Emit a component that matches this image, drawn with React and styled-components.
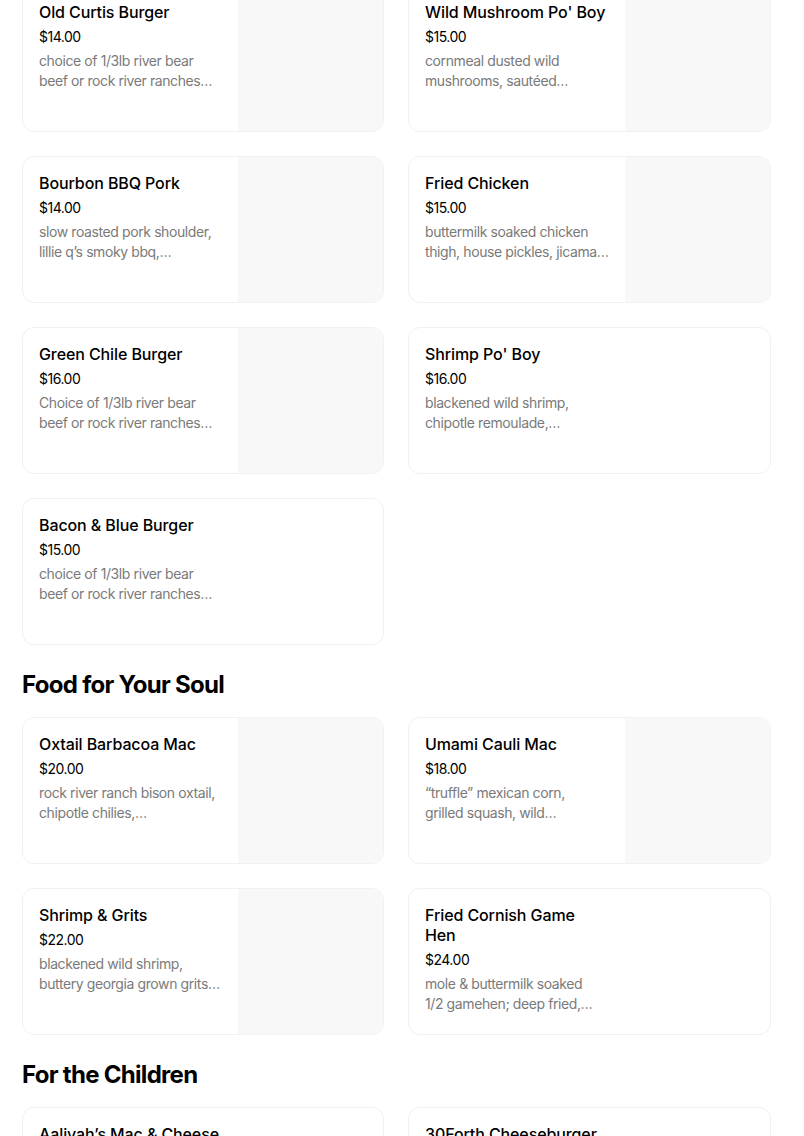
import styled, { createGlobalStyle } from "styled-components";

const nb = "\u00a0";

const sections = [
  {
    title: null,
    items: [
      { name: "Old Curtis Burger", price: "$14.00", desc: `choice of 1/3lb river bear beef or rock river ranches bison,${nb}cheddar`, img: true },
      { name: "Wild Mushroom Po' Boy", price: "$15.00", desc: `cornmeal dusted wild mushrooms, sautéed collard${nb}greens`, img: true },
      { name: "Bourbon BBQ Pork", price: "$14.00", desc: `slow roasted pork shoulder, lillie q’s smoky bbq, housemade${nb}slaw`, img: true },
      { name: "Fried Chicken", price: "$15.00", desc: "buttermilk soaked chicken thigh, house pickles, jicama slaw, hot honey", img: true },
      { name: "Green Chile Burger", price: "$16.00", desc: `Choice of 1/3lb river bear beef or rock river ranches bison,${nb}roasted`, img: true },
      { name: "Shrimp Po' Boy", price: "$16.00", desc: `blackened wild shrimp, chipotle remoulade, shredded${nb}lettuce`, img: false },
      { name: "Bacon & Blue Burger", price: "$15.00", desc: `choice of 1/3lb river bear beef or rock river ranches bison,${nb}bacon`, img: false },
    ],
  },
  {
    title: "Food for Your Soul",
    items: [
      { name: "Oxtail Barbacoa Mac", price: "$20.00", desc: `rock river ranch bison oxtail, chipotle chilies, cavatappi${nb}pasta`, img: true },
      { name: "Umami Cauli Mac", price: "$18.00", desc: `“truffle” mexican corn, grilled${nb}squash, wild mushrooms,${nb}cauliflower cream`, img: true },
      { name: "Shrimp & Grits", price: "$22.00", desc: `blackened wild shrimp, buttery georgia grown grits, andouille${nb}gravy`, img: true },
      { name: "Fried Cornish Game Hen", price: "$24.00", desc: `mole & buttermilk soaked 1/2${nb}gamehen; deep fried, collard${nb}greens`, img: false },
    ],
  },
  {
    title: "For the Children",
    items: [
      { name: "Aaliyah’s Mac & Cheese", price: "$9.00", desc: "cavatappi, cheese sauce", img: false },
      { name: "30Forth Cheeseburger", price: "$10.00", desc: "kids burger with cheddar", img: false },
    ],
  },
];

export default function App() {
  return (
    <>
      <GlobalStyle />
      <Page>
        {sections.map((s, i) => (
          <Section key={i}>
            {s.title && <Heading>{s.title}</Heading>}
            <Grid>
              {s.items.map((it) => (
                <Card key={it.name}>
                  <Info>
                    <Name>{it.name}</Name>
                    <Price>{it.price}</Price>
                    <Desc>{it.desc}</Desc>
                  </Info>
                  <Photo $empty={!it.img} />
                </Card>
              ))}
            </Grid>
          </Section>
        ))}
      </Page>
    </>
  );
}

const GlobalStyle = createGlobalStyle`
  html, body {
    margin: 0;
    padding: 0;
    background: #ffffff;
    overflow: hidden;
  }
  body {
    font-family: Inter, "Liberation Sans", sans-serif;
    color: #000;
  }
`;

const Page = styled.div`
  width: 749px;
  margin: -15px 0 0 22px;
  display: flex;
  flex-direction: column;
  gap: 24px;
`;

const Section = styled.section`
  display: flex;
  flex-direction: column;
`;

const Heading = styled.h2`
  margin: 0 0 16px;
  font-size: 24px;
  line-height: 32px;
  font-weight: 700;
  letter-spacing: -0.7px;
`;

const Grid = styled.div`
  display: grid;
  grid-template-columns: 362px 363px;
  gap: 24px;
`;

const Card = styled.div`
  height: 147px;
  box-sizing: border-box;
  border: 1px solid #f1f1f1;
  border-radius: 12px;
  overflow: hidden;
  display: flex;
  background: #fff;
`;

const Info = styled.div`
  flex: 1;
  min-width: 0;
  padding: 16px;
`;

const Name = styled.div`
  font-size: 16px;
  line-height: 20px;
  font-weight: 500;
  color: #000;
  letter-spacing: -0.1px;
`;

const Price = styled.div`
  margin-top: 5px;
  font-size: 14px;
  line-height: 20px;
  color: #000;
  letter-spacing: -0.5px;
`;

const Desc = styled.div`
  margin-top: 4px;
  font-size: 14px;
  line-height: 20px;
  color: #7a7a7a;
  letter-spacing: -0.4px;
  display: -webkit-box;
  -webkit-line-clamp: 2;
  -webkit-box-orient: vertical;
  overflow: hidden;
`;

const Photo = styled.div`
  width: 145px;
  flex-shrink: 0;
  background: ${(p) => (p.$empty ? "transparent" : "#f8f8f8")};
`;
